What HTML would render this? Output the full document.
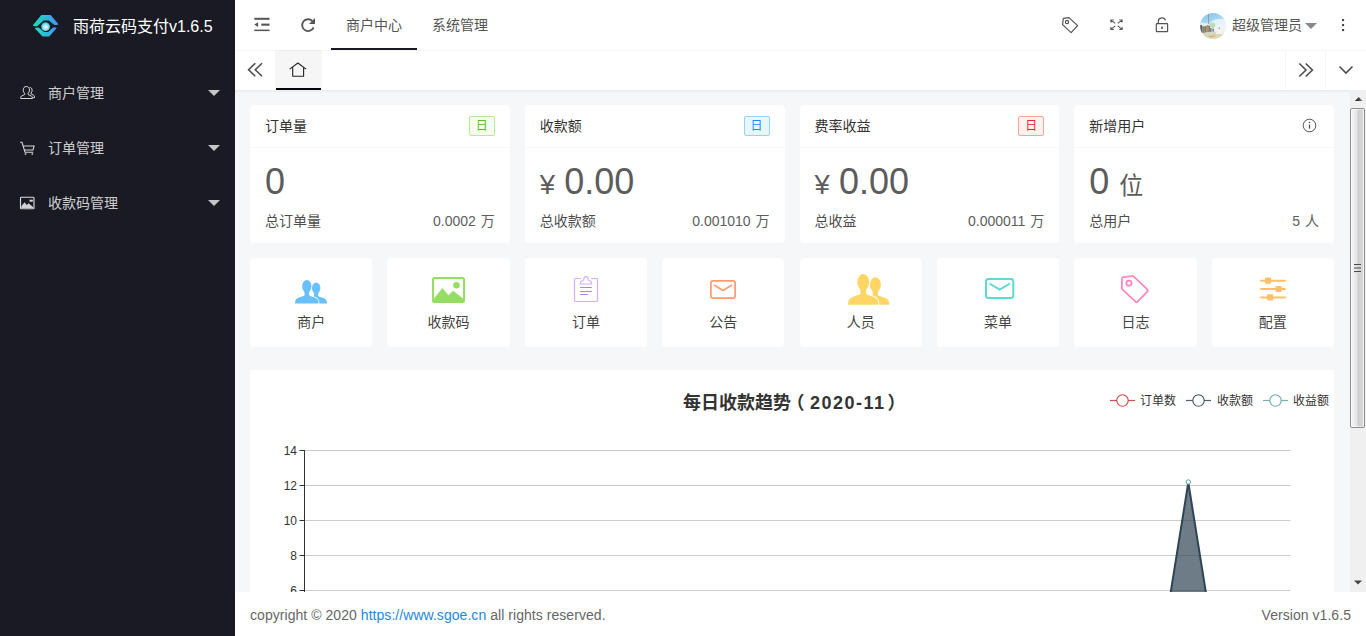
<!DOCTYPE html>
<html lang="zh-CN">
<head>
<meta charset="utf-8">
<title>雨荷云码支付v1.6.5</title>
<style>
*{box-sizing:border-box;margin:0;padding:0}
html,body{width:1366px;height:636px;overflow:hidden;background:#f5f7f9;font-family:"Liberation Sans","Noto Sans CJK SC",sans-serif;font-size:14px;color:#333}
a{text-decoration:none;color:inherit}
.abs{position:absolute}
#side{position:absolute;left:0;top:0;width:235px;height:636px;background:#191a23;color:#fff}
#logo{position:absolute;left:32px;top:13px;width:27px;height:25px}
#brand{position:absolute;left:73px;top:1px;height:50px;line-height:51px;font-size:16px;color:#fff;white-space:nowrap}
.mi{position:absolute;left:0;width:235px;height:55px;line-height:57px;color:rgba(255,255,255,.8);font-size:14px}
.mi .ic{position:absolute;left:20px;top:20px;width:16px;height:16px}
.mi .tx{position:absolute;left:48px;top:0}
.mi .ca{position:absolute;left:208px;top:25px;width:0;height:0;border-left:6px solid transparent;border-right:6px solid transparent;border-top:6px solid rgba(255,255,255,.75)}
#head{position:absolute;left:235px;top:0;width:1131px;height:50px;background:#fff}
#tabs{position:absolute;left:235px;top:50px;width:1131px;height:40px;background:#fff;box-shadow:0 1px 2px rgba(0,0,0,.06)}
.nav{position:absolute;top:0;height:50px;line-height:51px;font-size:14px;color:#555;white-space:nowrap}
svg{display:block;overflow:visible}
#body{position:absolute;left:235px;top:90px;width:1115px;height:502px;overflow:hidden;background:#f5f7f9}
.card{position:absolute;background:#fff;border-radius:4px}
.ch{position:absolute;left:0;top:0;right:0;height:43px;line-height:43px;border-bottom:1px solid #f6f6f6;padding-left:15px;font-size:14px;color:#333}
.badge{position:absolute;right:15px;top:11px;height:20px;line-height:19px;width:26px;text-align:center;font-size:12px;border-radius:2px;border:1px solid}
.big{position:absolute;left:15px;top:54px;font-size:36px;line-height:46px;color:#5c5c5c;white-space:nowrap}
.big small{font-size:24px}.big small.y{font-size:27.5px;letter-spacing:-.8px}
.bl{position:absolute;left:15px;top:106px;line-height:20px;font-size:14px;color:#4d4d4d}
.br{word-spacing:1px;position:absolute;right:15px;top:106px;line-height:20px;font-size:14px;color:#5e5e5e}
.q{position:absolute;top:168px;height:89px;width:122.4px;background:#fff;border-radius:4px;text-align:center}
.q .t{position:absolute;left:0;right:0;top:53.5px;line-height:20px;font-size:14px;color:#444}
.q svg{position:absolute}
#foot{position:absolute;left:235px;top:592px;width:1131px;height:44px;background:#fff;line-height:46px;font-size:14px;color:#666;letter-spacing:.05px}
</style>
</head>
<body>
<div id="side">
  <svg id="logo" viewBox="32 13 27 25" width="27" height="25">
    <defs>
      <linearGradient id="lg1" x1="33" y1="0" x2="58" y2="0" gradientUnits="userSpaceOnUse"><stop offset="0" stop-color="#1fe0b4"/><stop offset=".55" stop-color="#2fb8dc"/><stop offset="1" stop-color="#4f8dfa"/></linearGradient>
      <radialGradient id="lg2" cx=".5" cy=".55" r=".55"><stop offset="0" stop-color="#ffffff"/><stop offset=".4" stop-color="#b5e9ff"/><stop offset="1" stop-color="#1fc4d2"/></radialGradient>
    </defs>
    <path d="M33.600 25.300 L41.600 15.600 L50.400 15.700 L57.600 24.200 L54.800 24.400 L48.800 19.800 L43.700 19.800 L36.600 25.900 Z" fill="url(#lg1)" stroke="url(#lg1)" stroke-width="1.200" stroke-linejoin="round"/>
    <path d="M35.600 28.400 L38.400 28 L44 32.700 L48.200 32.700 L53.200 28.200 L55.800 28 L48.800 36 L43 36 Z" fill="url(#lg1)" stroke="url(#lg1)" stroke-width="1.200" stroke-linejoin="round"/>
    <circle cx="45.6" cy="26.6" r="4.4" fill="url(#lg2)"/>
  </svg>
  <div id="brand">雨荷云码支付v1.6.5</div>
  <div class="mi" style="top:65px"><svg class="ic" viewBox="0 0 16 16" width="16" height="16" fill="none" stroke="rgba(255,255,255,.82)" stroke-width="1"><path d="M6.3 1.5c1.9 0 3.2 1.5 3.2 3.6 0 1.5-.6 2.7-1.5 3.4v.9l3.6 1.8c.5.3.7.7.7 1.2v1.1H.7v-1.1c0-.5.2-.9.7-1.200l3.400-1.800v-.9C3.900 7.800 3.200 6.600 3.200 5.100 3.200 3 4.400 1.500 6.300 1.500z"/><path d="M9.600 2.300c1.500.1 2.500 1.300 2.500 3 0 1.200-.4 2.100-1.100 2.800v.8l2.700 1.400c.5.300.8.700.8 1.200v1.200h-2"/></svg><span class="tx">商户管理</span><i class="ca"></i></div>
  <div class="mi" style="top:120px"><svg class="ic" viewBox="0 0 16 16" width="16" height="16" fill="none" stroke="rgba(255,255,255,.82)" stroke-width="1.1"><path d="M.1 2.300h1.900l3 9.900h8.300M3.200 6h10.900l-1.100 4H4.500"/><path d="M5.500 13.200v1.600M12.300 13.200v1.600" stroke-width="1.500"/></svg><span class="tx">订单管理</span><i class="ca"></i></div>
  <div class="mi" style="top:175px"><svg class="ic" viewBox="0 0 16 16" width="16" height="16"><rect x=".5" y="2.300" width="13.500" height="11.400" rx=".8" fill="none" stroke="rgba(255,255,255,.85)" stroke-width="1.100"/><path d="M1.300 11.300L4.500 7.200l2.300 2.900 1.800-1.900 4.700 4v.9H1.300z" fill="rgba(255,255,255,.8)"/><rect x="9.600" y="4.700" width="3.200" height="2" fill="rgba(255,255,255,.85)"/></svg><span class="tx">收款码管理</span><i class="ca"></i></div>
</div>
<div id="head">
  <div class="nav" style="left:111px">商户中心</div>
  <div class="abs" style="left:96px;top:48px;width:86px;height:2px;background:#191a23"></div>
  <div class="nav" style="left:197px">系统管理</div>
  <div class="nav" style="left:997px">超级管理员</div>
  <svg class="abs" style="left:19px;top:17px" width="16" height="15" viewBox="254 17 16 15" fill="#555"><rect x="254.300" y="17.800" width="15.200" height="2"/><rect x="261.300" y="23.600" width="8.200" height="2.100"/><rect x="254.300" y="29.600" width="15.200" height="1.500"/><path d="M254.200 24.600l3.900-2.300v4.600z"/></svg>
  <svg class="abs" style="left:65px;top:17px" width="16" height="16" viewBox="300 17 16 16"><path d="M313.600 27.300a5.900 5.900 0 1 1-1.300-6.300" fill="none" stroke="#555" stroke-width="1.800"/><path d="M315 18v6h-6z" fill="#555"/></svg>
  <svg class="abs" style="left:827px;top:17px" width="16" height="16" viewBox="0 0 16 16" fill="none" stroke="#555" stroke-width="1.200" stroke-linejoin="round"><path d="M1.300 1.300L7 .6l8.600 8-6.500 7L.600 7.600z"/><circle cx="5" cy="5" r="1.600"/></svg>
  <svg class="abs" style="left:875px;top:18.700px" width="13" height="11.600" viewBox="0 0 13 13" preserveAspectRatio="none" fill="none" stroke="#555" stroke-width="1.050"><path d="M5.200 5L1 1.200M.9 3.900V1h2.900M7.800 5L12 1.200M9.200 1h2.900v2.900M5.200 7.800L1 11.600M.9 8.900v2.900h2.900M7.800 7.800l4.200 3.800M9.200 11.800h2.900V8.900"/></svg>
  <svg class="abs" style="left:920px;top:17px" width="14" height="16" viewBox="0 0 14 16" fill="none" stroke="#555" stroke-width="1.200"><rect x="1.300" y="6.700" width="11.300" height="8" rx=".6"/><path d="M3.300 6.700V4.600a3.700 3.700 0 0 1 7.200-1.200"/><path d="M7 9.500v2.400" stroke-width="1.600"/></svg>
  <svg class="abs" style="left:965px;top:13px" width="26" height="26" viewBox="0 0 26 26">
    <defs><clipPath id="avc"><circle cx="13" cy="13" r="13"/></clipPath>
    <linearGradient id="avg" x1="0" y1="0" x2=".3" y2="1"><stop offset="0" stop-color="#7cc0ec"/><stop offset=".38" stop-color="#a5d6f3"/><stop offset=".62" stop-color="#e9f4fa"/><stop offset="1" stop-color="#f3f3ea"/></linearGradient>
    <filter id="avb" x="-10%" y="-10%" width="120%" height="120%"><feGaussianBlur stdDeviation=".45"/></filter></defs>
    <g clip-path="url(#avc)"><rect width="26" height="26" fill="url(#avg)"/>
    <g filter="url(#avb)">
    <path d="M12 8c3-2 7-3 14-1v10H10c-1-3 0-7 2-9z" fill="#eaf5fb" opacity=".85"/>
    <path d="M0 9c3 .5 6 2 8 1l2 3H0z" fill="#e6f3fa" opacity=".8"/>
    <rect x="8" y=".8" width=".9" height="10" fill="#8f9a90"/>
    <path d="M9.500 11.500c1-2.200 4.500-2.400 5.600-.4.800 1.600-.2 3.600-2.200 4-1.800.3-4-1.600-3.400-3.600z" fill="#b9ddb0"/>
    <rect x=".3" y="12" width="1.600" height="7.500" fill="#46524a"/>
    <rect x="1.900" y="13" width="1.200" height="7" fill="#8d9aa6"/>
    <rect x="3.100" y="13.600" width="1.200" height="7" fill="#b5623a"/>
    <rect x="4.300" y="13" width="2.400" height="7.600" fill="#68866a"/>
    <rect x="6.700" y="12" width="2" height="8.600" fill="#c58a58"/>
    <rect x="8.700" y="13" width="1" height="6.500" fill="#3f4560"/>
    <rect x="10" y="15" width="1.600" height="4" fill="#8a7a80"/>
    <rect x="12.500" y="15.600" width="1.200" height="3.400" fill="#5a5060"/>
    <path d="M0 20.500l8-1.500 6-.5 12 1V26H0z" fill="#ddd6bc"/>
    <path d="M7.500 19.500h4.500v2.500H7.500z" fill="#cfd9dc"/>
    <path d="M16 19l4-3 3 .5 2 2.500-3 2h-6z" fill="#f4f3ee"/>
    <rect x="18.800" y="14.600" width=".9" height="1.400" fill="#d04a3c"/>
    <path d="M8 23l6-.800 2 1-6 1.300z" fill="#cdb85e"/>
    </g></g>
  </svg>
  <i class="abs" style="left:1070px;top:23px;border-left:6px solid transparent;border-right:6px solid transparent;border-top:6px solid #888"></i>
  <svg class="abs" style="left:1106px;top:17px" width="4" height="16" viewBox="0 0 4 16" fill="#444"><rect x="1" y="2" width="2.100" height="2.100"/><rect x="1" y="7" width="2.100" height="2.100"/><rect x="1" y="12" width="2.100" height="2.100"/></svg>

</div>
<div id="tabs">
  <div class="abs" style="left:40px;top:0;width:47px;height:40px;background:#f6f6f6"></div><div class="abs" style="left:41px;top:38px;width:45px;height:2px;background:#05050d"></div><div class="abs" style="left:0;top:0;width:1131px;height:1px;background:rgba(0,0,0,.035)"></div>
  
  <svg class="abs" style="left:12px;top:12px" width="16" height="16" viewBox="247 62 16 16" fill="none" stroke="#4d4d4d" stroke-width="1.600"><path d="M255.300 63.300l-6.700 6.500 6.700 6.500M262 63.300l-6.700 6.500 6.700 6.500"/></svg>
  <svg class="abs" style="left:54px;top:12px" width="18" height="16" viewBox="289 62 18 16" fill="none" stroke="#222" stroke-width="1.100" stroke-linejoin="round"><path d="M289.700 69.100l8.200-6.100 8.200 6.100M292.700 67.600v8.700h10.900v-8.700"/></svg>
  <svg class="abs" style="left:1063px;top:12px" width="16" height="16" viewBox="1298 62 16 16" fill="none" stroke="#4d4d4d" stroke-width="1.600"><path d="M1299.300 63.500l6.700 6.500-6.700 6.500M1305.700 63.500l6.700 6.500-6.700 6.500"/></svg>
  <svg class="abs" style="left:1103px;top:15px" width="16" height="10" viewBox="1338 65 16 10" fill="none" stroke="#4d4d4d" stroke-width="1.600"><path d="M1339.500 66.500l6.500 6.500 6.500-6.500"/></svg>
  <div class="abs" style="left:1050px;top:0;width:1px;height:40px;background:#f6f6f6"></div>
  <div class="abs" style="left:1090px;top:0;width:1px;height:40px;background:#f6f6f6"></div>
</div>
<div id="body">
  <div class="abs" style="left:0;top:0;width:1115px;height:3px;background:linear-gradient(rgba(0,0,0,.055),rgba(0,0,0,0))"></div>
  <div class="card" style="left:15px;top:15px;width:259.75px;height:138px">
    <div class="ch">订单量<span class="badge" style="color:#52c41a;background:#f6ffed;border-color:#b7eb8f">日</span></div>
    <div class="big">0</div><div class="bl">总订单量</div><div class="br">0.0002 万</div>
  </div>
  <div class="card" style="left:289.75px;top:15px;width:259.75px;height:138px">
    <div class="ch">收款额<span class="badge" style="color:#1890ff;background:#e6f7ff;border-color:#91d5ff">日</span></div>
    <div class="big"><small class="y">¥</small> 0.00</div><div class="bl">总收款额</div><div class="br">0.001010 万</div>
  </div>
  <div class="card" style="left:564.5px;top:15px;width:259.75px;height:138px">
    <div class="ch">费率收益<span class="badge" style="color:#f5222d;background:#fff1f0;border-color:#ffa39e">日</span></div>
    <div class="big"><small class="y">¥</small> 0.00</div><div class="bl">总收益</div><div class="br">0.000011 万</div>
  </div>
  <div class="card" style="left:839.25px;top:15px;width:259.75px;height:138px">
    <div class="ch">新增用户<svg class="abs" style="right:17px;top:13px" width="15" height="15" viewBox="0 0 15 15" fill="none" stroke="#555" stroke-width="1"><circle cx="7.500" cy="7.500" r="6.300"/><path d="M7.500 6.500v4.200" stroke-width="1.300"/><circle cx="7.500" cy="4.500" r=".8" fill="#555" stroke="none"/></svg></div>
    <div class="big">0 <small>位</small></div><div class="bl">总用户</div><div class="br">5 人</div>
  </div>
  <div class="q" style="left:15px"><svg viewBox="0 0 32 23.400" width="32" height="23.4" preserveAspectRatio="none" style="left:44.6px;top:22.4px" fill="#69c0ff"><g transform="translate(10.300,2.500) scale(.92,.893)"><ellipse cx="11.800" cy="6.300" rx="4.600" ry="6.300"/><path d="M0 23.400c0-3.600 1.400-5.200 4.600-6.200l3.900-1.300c.8-.3 1.200-.8 1.200-1.600l-.5-3.400h5.200l-.5 3.400c0 .8.400 1.300 1.200 1.600l3.900 1.300c3.200 1 4.600 2.600 4.600 6.200z"/></g><g fill="none" stroke="#fff" stroke-width="1.500"><ellipse cx="11.800" cy="6.300" rx="4.600" ry="6.300"/><path d="M0 23.400c0-3.600 1.400-5.200 4.600-6.200l3.900-1.300c.8-.3 1.200-.8 1.200-1.600l-.5-3.400h5.200l-.5 3.400c0 .8.400 1.300 1.200 1.600l3.900 1.300c3.200 1 4.600 2.600 4.600 6.200z"/></g><g><ellipse cx="11.800" cy="6.300" rx="4.600" ry="6.300"/><path d="M0 23.400c0-3.600 1.400-5.200 4.600-6.200l3.900-1.300c.8-.3 1.200-.8 1.200-1.600l-.5-3.400h5.200l-.5 3.400c0 .8.400 1.300 1.200 1.600l3.900 1.300c3.200 1 4.600 2.600 4.600 6.200z"/></g></svg><div class="t">商户</div></div>
  <div class="q" style="left:152.4px"><svg viewBox="0 0 33 26" width="33" height="26" style="left:44.7px;top:18.8px"><rect x="1" y="1" width="31" height="24" rx="1.500" fill="none" stroke="#95de64" stroke-width="2"/><path d="M2 21.500L10.500 11l6 7.200 4.700-4.400L31 21.500V24H2z" fill="#95de64"/><circle cx="24.500" cy="8.200" r="3.300" fill="#95de64"/></svg><div class="t">收款码</div></div>
  <div class="q" style="left:289.75px"><svg viewBox="0 0 24 26" width="24" height="26" style="left:49.2px;top:18.0px" fill="none"><path d="M7 2.500H1.500a1 1 0 0 0-1 1V24.500a1 1 0 0 0 1 1h21a1 1 0 0 0 1-1V3.500a1 1 0 0 0-1-1H17" stroke="#d3adf7" stroke-width="1.200"/><path d="M6.300 8h11.400v-.8c0-1-.6-1.700-1.500-2.100l-1.500-.7c-.4-.2-.5-.5-.5-.9 0-1.700-.8-2.900-2.200-2.900S9.800 1.800 9.800 3.500c0 .4-.1.700-.5.900l-1.500.7C6.900 5.500 6.300 6.200 6.300 7.200z" stroke="#d3adf7" stroke-width="1.100"/><path d="M6.200 11.500h11.600M6.200 15.500h11.600M6.200 18.500h7.600" stroke="#b37feb" stroke-width="1"/></svg><div class="t">订单</div></div>
  <div class="q" style="left:427.1px"><svg viewBox="0 0 26 19" width="26" height="19" style="left:48.2px;top:21.7px" fill="none" stroke="#ff9c6e" stroke-width="1.700" stroke-linejoin="round"><rect x=".9" y=".9" width="24.200" height="17.200" rx="2.200"/><path d="M4 5l9 5.500L22 5"/></svg><div class="t">公告</div></div>
  <div class="q" style="left:564.5px"><svg viewBox="0 0 32 23.400" width="41.4" height="30.7" preserveAspectRatio="none" style="left:48.4px;top:15.8px" fill="#ffd666"><g transform="translate(10.300,2.500) scale(.92,.893)"><ellipse cx="11.800" cy="6.300" rx="4.600" ry="6.300"/><path d="M0 23.400c0-3.600 1.400-5.200 4.600-6.200l3.900-1.300c.8-.3 1.200-.8 1.200-1.600l-.5-3.400h5.200l-.5 3.400c0 .8.400 1.300 1.200 1.600l3.900 1.300c3.200 1 4.600 2.600 4.600 6.200z"/></g><g fill="none" stroke="#fff" stroke-width="1.500"><ellipse cx="11.800" cy="6.300" rx="4.600" ry="6.300"/><path d="M0 23.400c0-3.600 1.400-5.200 4.600-6.200l3.900-1.300c.8-.3 1.200-.8 1.200-1.600l-.5-3.400h5.200l-.5 3.400c0 .8.400 1.300 1.200 1.600l3.900 1.300c3.200 1 4.600 2.600 4.600 6.200z"/></g><g><ellipse cx="11.800" cy="6.300" rx="4.600" ry="6.300"/><path d="M0 23.400c0-3.600 1.400-5.200 4.600-6.200l3.900-1.300c.8-.3 1.200-.8 1.200-1.600l-.5-3.400h5.200l-.5 3.400c0 .8.400 1.300 1.200 1.600l3.900 1.300c3.200 1 4.600 2.600 4.600 6.200z"/></g></svg><div class="t">人员</div></div>
  <div class="q" style="left:701.9px"><svg viewBox="0 0 29.300 21" width="29.300" height="21" style="left:48.6px;top:19.9px" fill="none" stroke="#5cdbd3" stroke-width="2" stroke-linejoin="round"><rect x="1" y="1" width="27.300" height="19" rx="2.500"/><path d="M4.500 5.500l10.200 6.200L25 5.500"/></svg><div class="t">菜单</div></div>
  <div class="q" style="left:839.25px"><svg viewBox="0 0 16 16" width="27.700" height="27.700" style="left:47.2px;top:17.4px" fill="none" stroke="#ff85c0" stroke-width="1" stroke-linejoin="round"><path d="M1.300 1.200L6.200.6c.5-.1.900.1 1.200.4l7.800 7.300c.4.400.4.900 0 1.300L9.600 15.400c-.3.400-.9.400-1.200 0L.9 8.500C.6 8.200.5 7.900.5 7.500L.6 2c0-.4.300-.7.700-.8z"/><circle cx="4.600" cy="4.700" r="1.500"/></svg><div class="t">日志</div></div>
  <div class="q" style="left:976.6px"><svg viewBox="0 0 26 24" width="26" height="24" style="left:48.1px;top:19.0px" fill="#ffc069"><rect x="0" y="2.700" width="26" height="2" rx="1"/><rect x="0" y="11" width="26" height="2" rx="1"/><rect x="0" y="19.400" width="26" height="2" rx="1"/><rect x="5" y=".6" width="6.200" height="6.200" rx="1"/><rect x="15.500" y="8.900" width="6.200" height="6.200" rx="1"/><rect x="7" y="17.300" width="6.200" height="6.200" rx="1"/></svg><div class="t">配置</div></div>
  <div class="card" id="chart" style="border-radius:0;left:15px;top:280px;width:1084px;height:400px">
    <svg class="abs" style="left:0;top:0" width="1084" height="400" viewBox="250 370 1084 400" font-family="'Liberation Sans','Noto Sans CJK SC',sans-serif">
      <text y="408.500" font-size="18" font-weight="bold" fill="#333" font-family="'Liberation Sans','Noto Sans CJK SC',sans-serif"><tspan x="683">每日收款趋势</tspan><tspan x="786.500">（</tspan><tspan x="810" letter-spacing="1.500">2020-11</tspan><tspan x="887.500">）</tspan></text>
      <g font-size="12" fill="#333">
        <path d="M1110 400.500h25" stroke="#c23531" stroke-width="1.200" stroke-opacity=".85"/><circle cx="1122.500" cy="400.500" r="5.700" fill="#fff" stroke="#c23531" stroke-width="1.100" stroke-opacity=".9"/><text x="1140" y="405">订单数</text>
        <path d="M1186 400.500h25" stroke="#2f4554" stroke-width="1.200" stroke-opacity=".85"/><circle cx="1198.500" cy="400.500" r="5.700" fill="#fff" stroke="#2f4554" stroke-width="1.100" stroke-opacity=".9"/><text x="1217" y="405">收款额</text>
        <path d="M1263 400.500h25" stroke="#61a0a8" stroke-width="1.200" stroke-opacity=".85"/><circle cx="1275.500" cy="400.500" r="5.700" fill="#fff" stroke="#61a0a8" stroke-width="1.100" stroke-opacity=".9"/><text x="1293" y="405">收益额</text>
      </g>
      <path d="M304 450.5H1290.500" stroke="#ccc" stroke-width="1"/><path d="M304 485.5H1290.500" stroke="#ccc" stroke-width="1"/><path d="M304 520.5H1290.500" stroke="#ccc" stroke-width="1"/><path d="M304 555.5H1290.500" stroke="#ccc" stroke-width="1"/><path d="M304 590.5H1290.500" stroke="#ccc" stroke-width="1"/><path d="M304 626.5H1290.500" stroke="#ccc" stroke-width="1"/><path d="M304 661.5H1290.500" stroke="#ccc" stroke-width="1"/>
      <path d="M304.500 450V697" stroke="#333" stroke-width="1"/>
      <path d="M299.500 450.5H304.500" stroke="#333" stroke-width="1"/><path d="M299.500 485.5H304.500" stroke="#333" stroke-width="1"/><path d="M299.500 520.5H304.500" stroke="#333" stroke-width="1"/><path d="M299.500 555.5H304.500" stroke="#333" stroke-width="1"/><path d="M299.500 590.5H304.500" stroke="#333" stroke-width="1"/><path d="M299.500 626.5H304.500" stroke="#333" stroke-width="1"/><path d="M299.500 661.5H304.500" stroke="#333" stroke-width="1"/><path d="M299.500 696.5H304.500" stroke="#333" stroke-width="1"/>
      <g font-size="12" fill="#333"><text x="297" y="454.5" text-anchor="end">14</text><text x="297" y="489.7" text-anchor="end">12</text><text x="297" y="524.9" text-anchor="end">10</text><text x="297" y="560.1" text-anchor="end">8</text><text x="297" y="595.3" text-anchor="end">6</text><text x="297" y="630.5" text-anchor="end">4</text><text x="297" y="665.7" text-anchor="end">2</text><text x="297" y="700.9" text-anchor="end">0</text></g>
      <path d="M1154 696.500L1188.300 482.500L1222.500 696.500z" fill="#2f4554" fill-opacity=".7" stroke="none"/>
      <path d="M1154 696.500L1188.300 482.500L1222.500 696.500" fill="none" stroke="#2f4554" stroke-width="2" stroke-linejoin="miter"/>
      <circle cx="1188.300" cy="482" r="2.200" fill="#fff" stroke="#61a0a8" stroke-width="1"/>
    </svg>
  </div>
</div>
<div id="foot">
  <span class="abs" style="left:15px;top:0;white-space:nowrap">copyright © 2020 <a style="color:#1e88e5">https://www.sgoe.cn</a> all rights reserved.</span>
  <span class="abs" style="right:15px;top:0;white-space:nowrap">Version v1.6.5</span>
</div>
<div id="sb" class="abs" style="left:1350px;top:90px;width:16px;height:502px;background:#f0f0f0">
  <svg class="abs" style="left:4.800px;top:7px" width="7.400" height="4" viewBox="0 0 7.400 4"><defs><linearGradient id="sag"><stop offset="0" stop-color="#111"/><stop offset="1" stop-color="#777"/></linearGradient></defs><path d="M0 4L3.700 0 7.400 4z" fill="url(#sag)"/></svg>
  <div class="abs" style="left:0px;top:18px;width:15px;height:320px;border:1px solid #8f8f8f;border-radius:2px;background:linear-gradient(90deg,#f6f6f6 0%,#e4e4e4 48%,#cdcdd1 52%,#d6d6d8 88%,#ececec 100%);box-shadow:inset 0 0 0 1px rgba(255,255,255,.55)"></div>
  <div class="abs" style="left:4px;top:173.500px;width:7px;height:1px;background:#4a4a4a;box-shadow:0 1px 0 #ddd,0 3.500px 0 #4a4a4a,0 4.500px 0 #ddd,0 7px 0 #4a4a4a,0 8px 0 #ddd"></div>
  <svg class="abs" style="left:4px;top:490px" width="8" height="5" viewBox="0 0 8 5"><path d="M0 .5h8L4 4.500z" fill="#444"/></svg>
</div>
</body>
</html>
